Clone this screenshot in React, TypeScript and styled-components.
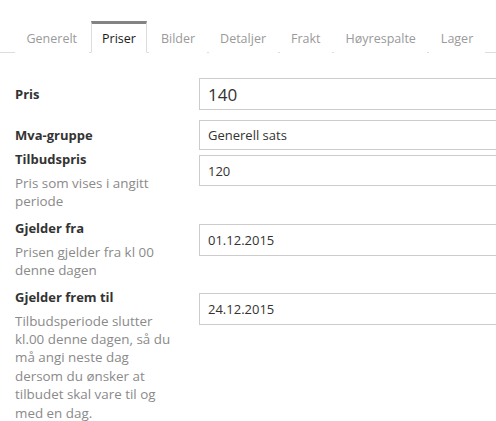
import React from "react";
import styled, { createGlobalStyle } from "styled-components";

const GlobalStyle = createGlobalStyle`
    html, body {
        margin: 0;
        padding: 0;
        background: #ffffff;
        overflow: hidden;
    }
    body {
        font-family: "Open Sans", "Noto Sans", sans-serif;
        color: #333333;
    }
`;

type Field = {
    label: string;
    help?: string;
    value: string;
    large?: boolean;
    select?: boolean;
    center?: boolean;
    height: number;
    spaceAfter: number;
};

const tabs = ["Generelt", "Priser", "Bilder", "Detaljer", "Frakt", "Høyrespalte", "Lager"];

const fields: Field[] = [
    { label: "Pris", value: "140", large: true, center: true, height: 32, spaceAfter: 10 },
    { label: "Mva-gruppe", value: "Generell sats", select: true, center: true, height: 30, spaceAfter: 0 },
    { label: "Tilbudspris", help: "Pris som vises i angitt periode", value: "120", height: 31, spaceAfter: 8 },
    { label: "Gjelder fra", help: "Prisen gjelder fra kl 00 denne dagen", value: "01.12.2015", height: 32, spaceAfter: 8 },
    {
        label: "Gjelder frem til",
        help: "Tilbudsperiode slutter kl.00 denne dagen, så du må angi neste dag dersom du ønsker at tilbudet skal vare til og med en dag.",
        value: "24.12.2015",
        height: 32,
        spaceAfter: 0,
    },
];

const Page = styled.div`
    width: 600px;
    padding-top: 21px;
`;

const TabBar = styled.ul`
    list-style: none;
    margin: 0;
    padding: 0 0 0 15px;
    display: flex;
    gap: 2px;
    border-bottom: 1px solid #dddddd;
    height: 31px;
`;

const Tab = styled.li<{ $active?: boolean }>`
    box-sizing: border-box;
    height: 32px;
    padding: 0 10.5px;
    display: flex;
    align-items: center;
    font-size: 12.5px;
    color: ${p => (p.$active ? "#1a1a1a" : "#9a9a9a")};
    background: #ffffff;
    border-top: 3px solid ${p => (p.$active ? "#838383" : "transparent")};
    border-left: 1px solid ${p => (p.$active ? "#dddddd" : "transparent")};
    border-right: 1px solid ${p => (p.$active ? "#dddddd" : "transparent")};
    border-bottom: 1px solid ${p => (p.$active ? "#ffffff" : "transparent")};
`;

const Form = styled.div`
    padding: 25px 0 0 15px;
    display: flex;
    flex-direction: column;
`;

const Row = styled.div<{ $space: number; $center?: boolean }>`
    display: grid;
    grid-template-columns: 184px 340px;
    align-items: ${p => (p.$center ? "center" : "start")};
    margin-bottom: ${p => p.$space}px;
`;

const LabelBlock = styled.div`
    display: flex;
    flex-direction: column;
`;

const Label = styled.label`
    font-size: 13px;
    font-weight: 700;
    line-height: 18.5px;
    color: #333333;
`;

const Help = styled.div`
    width: 162px;
    margin-top: 5.5px;
    font-size: 13.4px;
    line-height: 18.4px;
    color: #8a8a8a;
`;

const Input = styled.input<{ $large?: boolean; $height: number; $offset: boolean }>`
    box-sizing: border-box;
    width: 100%;
    height: ${p => p.$height}px;
    margin-top: ${p => (p.$offset ? 5 : 0)}px;
    padding: 0 8px;
    border: 1px solid #cccccc;
    border-radius: 0;
    outline: none;
    background: #ffffff;
    font-family: "Open Sans", "Noto Sans", sans-serif;
    font-size: ${p => (p.$large ? 17 : 13)}px;
    color: #333333;
`;

const Select = styled.select<{ $height: number }>`
    box-sizing: border-box;
    width: 100%;
    height: ${p => p.$height}px;
    padding: 0 8px;
    border: 1px solid #cccccc;
    border-radius: 0;
    appearance: none;
    outline: none;
    background: #ffffff;
    font-family: "Open Sans", "Noto Sans", sans-serif;
    font-size: 13px;
    color: #333333;
`;

const App: React.FunctionComponent = () => {
    return (
        <Page>
            <GlobalStyle />
            <TabBar>
                {tabs.map(tab => (
                    <Tab key={tab} $active={tab === "Priser"}>
                        {tab}
                    </Tab>
                ))}
            </TabBar>

            <Form>
                {fields.map(field => (
                    <Row key={field.label} $space={field.spaceAfter} $center={field.center}>
                        <LabelBlock>
                            <Label>{field.label}</Label>
                            {field.help && <Help>{field.help}</Help>}
                        </LabelBlock>
                        {field.select ? (
                            <Select $height={field.height} defaultValue={field.value}>
                                <option>{field.value}</option>
                            </Select>
                        ) : (
                            <Input
                                $large={field.large}
                                $height={field.height}
                                $offset={!field.center}
                                defaultValue={field.value}
                                readOnly
                            />
                        )}
                    </Row>
                ))}
            </Form>
        </Page>
    );
};

export default App;
